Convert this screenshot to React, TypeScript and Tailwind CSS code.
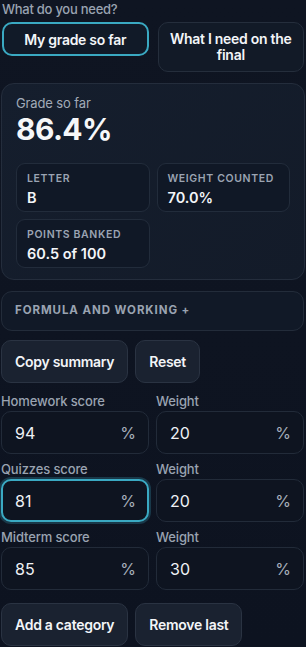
import React from "react";

const font = { fontFamily: "Inter, 'Noto Sans', sans-serif" };

function Field({ label, value, focused }: { label: string; value: string; focused?: boolean }) {
  return (
    <div className="flex flex-col">
      <div className="text-[13px] leading-[20px] font-medium tracking-[-0.01em] text-[#9aa3b1]">{label}</div>
      <div
        className={
          "h-[43px] rounded-[10px] flex items-center justify-between bg-[#0e1420] " +
          (focused
            ? "border-2 border-[#3aa9c2] shadow-[0_0_0_2px_rgba(58,169,194,0.25)] pl-[12px] pr-[11px]"
            : "border border-[#222b39] pl-[13px] pr-[12px]")
        }
      >
        <span className="text-[16px] text-[#eef1f5]">{value}</span>
        <span className="text-[16px] text-[#a7afbb]">%</span>
      </div>
    </div>
  );
}

function Stat({ label, value }: { label: string; value: string }) {
  return (
    <div className="h-[49px] rounded-[9px] border border-[#222c3b] bg-[#101826] px-[10px] pt-[8px]">
      <div className="text-[10.5px] leading-[14px] font-semibold tracking-[0.06em] uppercase text-[#9ba4b3] whitespace-nowrap">
        {label}
      </div>
      <div className="text-[14.5px] leading-[20px] font-semibold text-[#f3f5f8] mt-[2px]">{value}</div>
    </div>
  );
}

const btn =
  "h-[43px] rounded-[10px] border border-[#2a3342] bg-[#1a2230] px-[13px] text-[14px] tracking-[-0.02em] font-semibold text-[#f3f5f8]";

export default function App() {
  return (
    <div
      style={font}
      className="min-h-[647px] w-[306px] overflow-hidden bg-[linear-gradient(180deg,#0f1522_0%,#0d1320_100%)] text-white pl-[1px] pr-[2px]"
    >
      <div className="text-[13px] leading-[18px] font-medium tracking-[-0.02em] text-[#9aa3b1] pl-[1px]">
        What do you need?
      </div>
      <div className="mt-[4px] grid grid-cols-2 gap-[9px] items-start pl-[1px]">
        <button className="h-[34px] rounded-[10px] border-2 border-[#3aa9c2] bg-[#111a28] text-[14px] tracking-[-0.02em] font-semibold text-[#f3f5f8] leading-[17px]">
          My grade so far
        </button>
        <button className="h-[50px] rounded-[10px] border border-[#252e3c] bg-[#121a27] text-[14px] tracking-[-0.02em] font-semibold text-[#f3f5f8] leading-[16px] px-2">
          What I need on the final
        </button>
      </div>

      <div className="mt-[11px] w-[304px] rounded-[13px] border border-[#242d3c] bg-[linear-gradient(135deg,#151e2d_0%,#131b29_100%)] px-[14px] pt-[11px] pb-[11px]">
        <div className="text-[13px] leading-[16px] tracking-[-0.01em] text-[#a2abb8]">Grade so far</div>
        <div className="text-[30px] leading-[36px] font-bold tracking-[-0.02em] text-[#f6f7f9]">86.4%</div>
        <div className="mt-[16px] grid grid-cols-2 gap-[7px]">
          <Stat label="Letter" value="B" />
          <Stat label="Weight counted" value="70.0%" />
          <Stat label="Points banked" value="60.5 of 100" />
        </div>
      </div>

      <div className="mt-[11px] h-[40px] rounded-[11px] border border-[#232c3a] bg-[#111927] flex items-center pl-[13px]">
        <span className="text-[11.5px] font-bold tracking-[0.08em] uppercase text-[#9aa3b1]">
          Formula and working +
        </span>
      </div>

      <div className="mt-[9px] flex gap-[7px]">
        <button className={btn}>Copy summary</button>
        <button className={btn}>Reset</button>
      </div>

      <div className="mt-[8px] grid grid-cols-2 gap-x-[7px] gap-y-[5px]">
        <Field label="Homework score" value="94" />
        <Field label="Weight" value="20" />
        <Field label="Quizzes score" value="81" focused />
        <Field label="Weight" value="20" />
        <Field label="Midterm score" value="85" />
        <Field label="Weight" value="30" />
      </div>

      <div className="mt-[13px] flex gap-[7px]">
        <button className={btn}>Add a category</button>
        <button className={btn}>Remove last</button>
      </div>
    </div>
  );
}
